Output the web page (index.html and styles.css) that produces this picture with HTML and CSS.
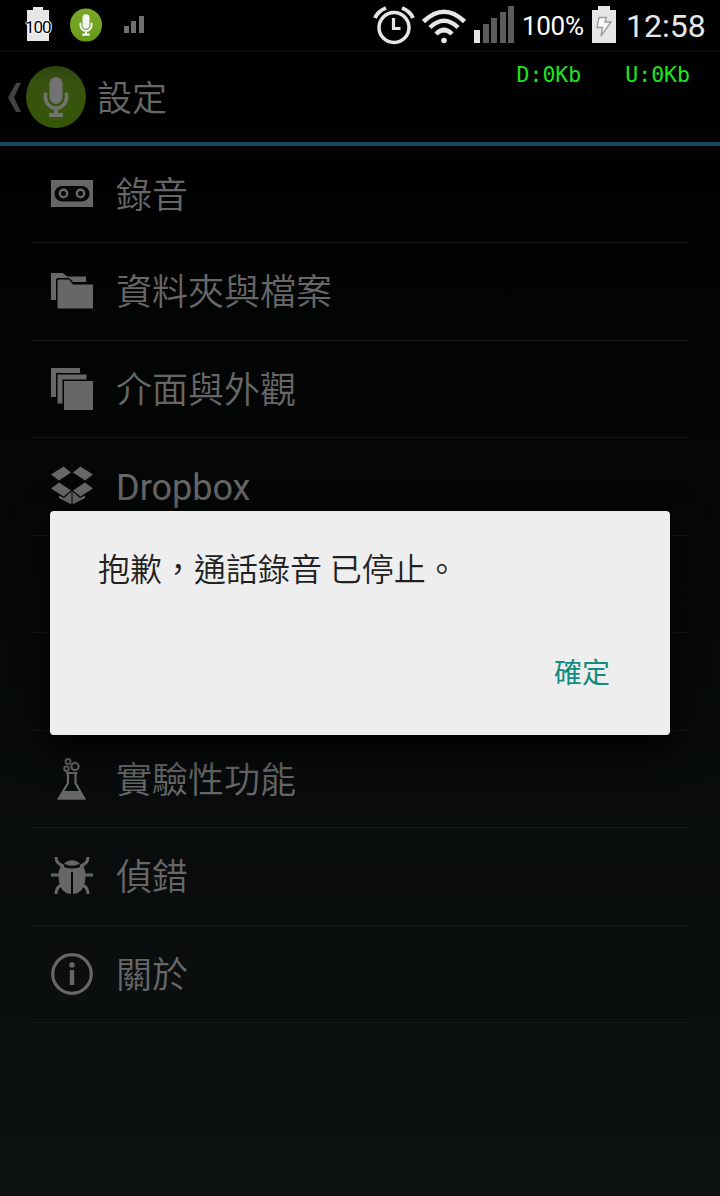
FILE: index.html
```html
<!DOCTYPE html>
<html lang="zh-Hant">
<head>
<meta charset="UTF-8">
<meta name="viewport" content="width=device-width, initial-scale=1.0">
<title>設定</title>
<link rel="stylesheet" href="styles.css">
</head>
<body>
<!-- Shared microphone logo -->
<svg class="defs" aria-hidden="true">
    <defs>
        <linearGradient id="green" x1="0" y1="0" x2="0" y2="1">
            <stop offset="0" stop-color="#7ba928"/>
            <stop offset="1" stop-color="#689b18"/>
        </linearGradient>
        <linearGradient id="darkGreen" x1="0" y1="0" x2="0" y2="1">
            <stop offset="0" stop-color="#2e4410"/>
            <stop offset="0.25" stop-color="#385210"/>
            <stop offset="1" stop-color="#355708"/>
        </linearGradient>
        <symbol id="mic" viewBox="0 0 60 62">
            <rect x="23.500" y="11" width="13" height="27" rx="6.500" fill="currentColor"/>
            <path d="M19.500 28v3.500a10.500 10.500 0 0 0 21 0V28" fill="none" stroke="currentColor" stroke-width="3.600" stroke-linecap="round"/>
            <path d="M28 41h4v6h5v4H23v-4h5z" fill="currentColor"/>
        </symbol>
    </defs>
</svg>
<div class="screen">
    <div class="status-bar">
        <div class="status-left">
            <div class="battery-level">
                <svg width="22" height="35" viewBox="0 0 22 35"><path d="M0 4h6V1h10v3h6v31H0z" fill="#e6e6e6"/></svg>
                <span>100</span>
            </div>
            <svg class="mic-small" width="32" height="34" viewBox="0 0 60 62">
                <ellipse cx="30" cy="31" rx="30" ry="31" fill="url(#green)"/>
                <use href="#mic" width="60" height="62" color="#f4f4f4"/>
            </svg>
            <svg width="20" height="18" viewBox="0 0 20 18" fill="#6f6f6f"><path d="M0 10h5v7H0zM7 5h5v12H7zM15 0h5v17h-5z"/></svg>
        </div>
        <div class="status-right">
            <svg width="42" height="40" viewBox="0 0 42 40" fill="none" stroke="#e6e6e6">
                <circle cx="21" cy="21.500" r="15" stroke-width="3.500"/>
                <path d="M20.500 12v10.500h7" stroke-width="3.200"/>
                <path d="M2 12Q5 5 13 2M29 2Q37 5 40 12" stroke-width="4"/>
            </svg>
            <svg class="wifi" width="44" height="36" viewBox="0 0 44 36" fill="none" stroke="#e6e6e6" stroke-width="4.500">
                <path d="M1.500 12.500Q22-7 42.500 12.500"/>
                <path d="M8 18.500Q22 5 36 18.500"/>
                <path d="M14 25Q22 17 30 25"/>
                <circle cx="22" cy="31.500" r="2.800" fill="#e6e6e6" stroke="none"/>
            </svg>
            <svg class="signal" width="40" height="38" viewBox="0 0 40 38" fill="#5c5c5c">
                <path d="M0 24h6v13H0z" fill="#e6e6e6"/>
                <path d="M9 18h6v19H9zM17 12h6v25h-6zM26 6h6v31h-6zM34 0h6v37h-6z"/>
            </svg>
            <span class="percent">100%</span>
            <svg class="charge" width="24" height="37" viewBox="0 0 24 37">
                <path d="M0 4h6V0h12v4h6v33H0z" fill="#e6e6e6"/>
                <path d="M7 11.500h7.500L13 16h6L9 30l1.500-8.500H5z" fill="#fafafa" stroke="#999" stroke-width="1.300"/>
            </svg>
            <span class="clock">12:58</span>
        </div>
    </div>

    <div class="header">
        <svg class="back" width="14" height="29" viewBox="0 0 14 29"><path d="M8 0h5L6 14.500 13 29H8L0 14.500z" fill="#424242"/></svg>
        <svg class="logo" width="60" height="62" viewBox="0 0 60 62">
            <ellipse cx="30" cy="31" rx="30" ry="31" fill="url(#darkGreen)"/>
            <use href="#mic" width="60" height="62" color="#727272"/>
        </svg>
        <span class="title">設定</span>
    </div>

    <div class="list">
        <div class="item">
            <svg class="icon" viewBox="0 0 42 42">
                <path d="M0 7h42v27H0z"/>
                <rect class="cut" x="3.500" y="13" width="35" height="15.500" rx="7.700"/>
                <circle class="line" cx="12.500" cy="20.500" r="3.700" stroke-width="2.400"/>
                <circle class="line" cx="29.500" cy="20.500" r="3.700" stroke-width="2.400"/>
            </svg>
            <span>錄音</span>
        </div>
        <div class="item">
            <svg class="icon" viewBox="0 0 42 42">
                <path d="M0 3h12l4 3.500h19V12H22l-4-4H7q-2 0-2 2v20H0z"/>
                <path d="M6.500 11q0-1.500 1.500-1.500h10L22 14.500h20V38.500H6.500z"/>
            </svg>
            <span>資料夾與檔案</span>
        </div>
        <div class="item">
            <svg class="icon" viewBox="0 0 42 42">
                <path d="M0 0h29v5H5v24H0z"/>
                <path d="M6.500 6.500h29v5h-24v24h-5z"/>
                <path d="M13 13h29v29H13z"/>
            </svg>
            <span>介面與外觀</span>
        </div>
        <div class="item latin">
            <svg class="icon" viewBox="0 0 42 42">
                <path d="M0 9.500 12.500 1.500l7.500 6-12 8zM42 9.500 29.500 1.500 22 7.500l12 8zM0 23.500l8-6 12 8-7.500 6zM42 23.500l-8-6-12 8 7.500 6z"/>
                <path d="M8 30.500l5 2.500 7.500-6.500V39.500L8 33zM34 30.500l-5 2.500-7.500-6.500V39.500L34 33z"/>
            </svg>
            <span>Dropbox</span>
        </div>
        <div class="item"></div>
        <div class="item"></div>
        <div class="item">
            <svg class="icon" viewBox="0 0 42 42">
                <path class="line" d="M15 15h11.500M17 15v10L8 40.500h25L24.500 25V15" stroke-width="2.200"/>
                <path d="M12.500 33h17l5.500 8.500H6z"/>
                <circle class="line" cx="17" cy="3.500" r="2.500" stroke-width="1.800"/>
                <circle class="line" cx="24" cy="8.500" r="3.600" stroke-width="2.200"/>
                <circle class="line" cx="15.500" cy="10.700" r="2.300" stroke-width="1.800"/>
            </svg>
            <span>實驗性功能</span>
        </div>
        <div class="item">
            <svg class="icon" viewBox="0 0 42 42">
                <path class="line" d="M5 2q0 6.500 8 9.500M37 2q0 6.500-8 9.500M0 20h9M42 20h-9M5 39q0-7 6-9M37 39q0-7-6-9" stroke-width="3"/>
                <path d="M13 8.500Q21 2 29 8.500 21 13 13 8.500z"/>
                <path d="M10 11q11 5 22 0 3 5 2.500 11-1 17-13.500 17T7.500 22Q7 16 10 11z"/>
                <path class="cut" d="M20 17h2v22.500h-2z"/>
            </svg>
            <span>偵錯</span>
        </div>
        <div class="item">
            <svg class="icon" viewBox="0 0 42 42">
                <circle class="line" cx="21" cy="21" r="19.300" stroke-width="3.200"/>
                <circle cx="21" cy="12" r="2.700"/>
                <path d="M18.800 17h4.400v15h-4.400z"/>
            </svg>
            <span>關於</span>
        </div>
    </div>

    <!-- Network speed overlay -->
    <div class="net-speed">
        <span>D:0Kb</span>
        <span>U:0Kb</span>
    </div>

    <div class="dialog">
        <div class="message">抱歉，通話錄音 已停止。</div>
        <div class="actions"><button class="ok-button">確定</button></div>
    </div>
</div>
</body>
</html>
```
FILE: styles.css
```css
* {
    box-sizing: border-box;
}
body {
    margin: 0;
    background-color: #000;
    font-family: Roboto, "Noto Sans CJK TC", sans-serif;
}
svg {
    display: block;
    flex-shrink: 0;
}
.defs {
    position: absolute;
    width: 0;
    height: 0;
}
.screen {
    position: relative;
    height: 1196px;
    overflow: hidden;
    background: linear-gradient(#000 0, #000100 146px, #050707 480px, #0b0e0f 960px, #0d1112 1196px);
}
.status-bar {
    display: flex;
    justify-content: space-between;
    height: 52px;
    padding: 6px 15px 0 27px;
    border-bottom: 2px solid #0a0a0a;
    background-color: #000;
    color: #e6e6e6;
}
.status-left {
    display: flex;
}
.status-left > svg:last-child {
    margin: 10px 0 0 22px;
}
.battery-level {
    position: relative;
}
.battery-level span {
    position: absolute;
    left: -2px;
    top: 12px;
    font-size: 17px;
    line-height: 18px;
    letter-spacing: -1px;
    color: #000;
    text-shadow: 1px 0 #fff, -1px 0 #fff, 0 1px #fff, 0 -1px #fff;
}
.mic-small {
    margin: 2px 0 0 21px;
}
.status-right {
    display: flex;
}
.wifi {
    margin: 3px 0 0 7px;
}
.signal {
    margin-left: 8px;
}
.percent {
    width: 70px;
    margin-left: 8px;
    font-size: 26px;
    line-height: 41px;
    letter-spacing: -0.3px;
    color: #fff;
    white-space: nowrap;
}
.charge {
    margin-right: 10px;
}
.clock {
    width: 79px;
    font-size: 32px;
    line-height: 40px;
    white-space: nowrap;
}
.header {
    display: flex;
    align-items: center;
    height: 94px;
    padding-left: 8px;
    border-bottom: 4px solid #16485d;
}
.logo {
    margin-left: 4px;
}
.title {
    margin-left: 11px;
    padding-bottom: 3px;
    font-size: 35px;
    font-weight: 350;
    color: #686868;
}
.list {
    margin: -0.5px 32px 0;
}
.item {
    display: flex;
    align-items: center;
    height: 97.5px;
    padding-left: 19px;
    border-bottom: 1.5px solid #171919;
    font-size: 36px;
    font-weight: 350;
    color: #676767;
}
.item span {
    padding-bottom: 4px;
}
.item.latin {
    font-weight: 400;
}
.item.latin span {
    padding: 4px 0 0;
}
.icon {
    width: 42px;
    height: 42px;
    margin-right: 23px;
    fill: #676767;
}
.icon .line {
    fill: none;
    stroke: #676767;
}
.icon .cut {
    fill: #050707;
}
.net-speed {
    position: absolute;
    top: 61px;
    right: 30px;
    display: flex;
    gap: 44px;
    font-family: "DejaVu Sans Mono", monospace;
    font-size: 21.5px;
    line-height: 28px;
    color: #1fe51f;
}
.dialog {
    position: absolute;
    top: 511px;
    left: 50px;
    width: 620px;
    height: 224px;
    padding: 36px 48px;
    border-radius: 4px;
    background-color: #eee;
    box-shadow: 0 12px 36px #000;
}
.message {
    font-size: 32px;
    font-weight: 350;
    line-height: 46px;
    color: #212121;
}
.actions {
    display: flex;
    justify-content: flex-end;
    margin-top: 57px;
}
.ok-button {
    margin-right: 12px;
    padding: 0;
    border: none;
    background: none;
    font-family: inherit;
    font-size: 28px;
    line-height: 48px;
    color: #128c7e;
}
```
